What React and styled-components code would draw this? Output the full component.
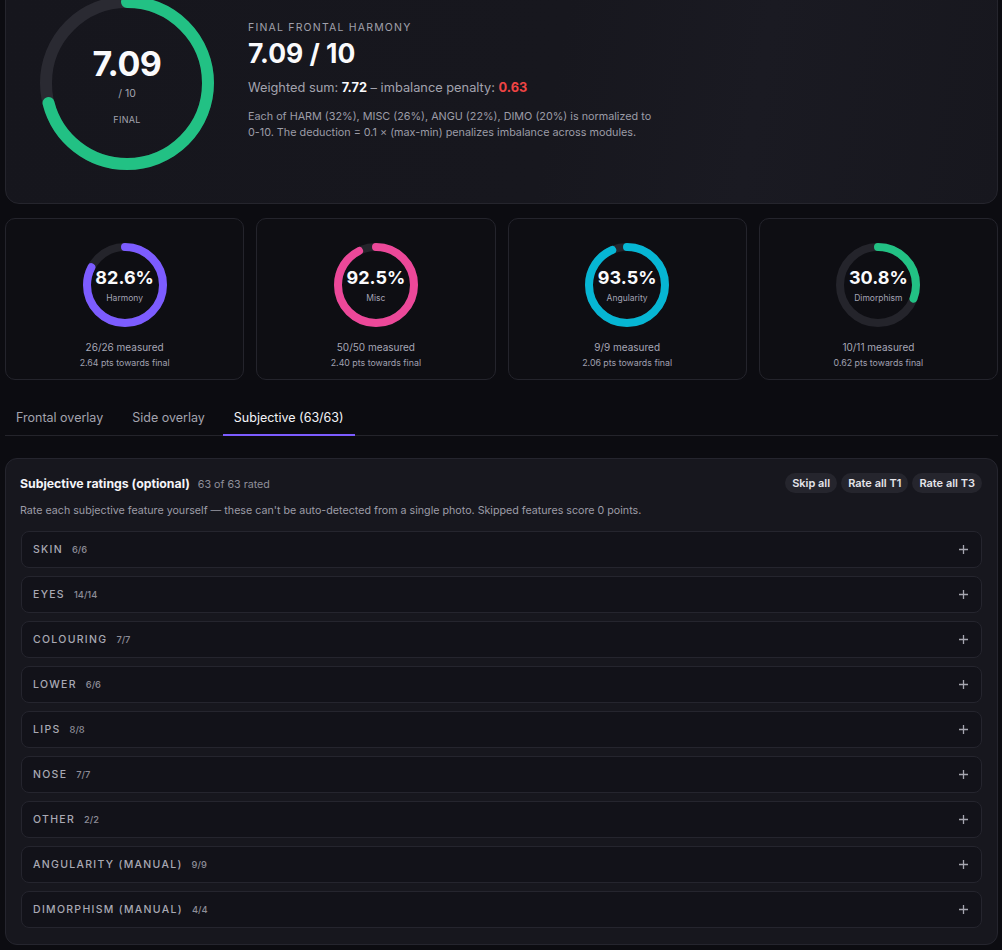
import React from 'react'
import styled, { createGlobalStyle } from 'styled-components'

const GlobalStyle = createGlobalStyle`
    html, body {
        margin: 0;
        padding: 0;
        background: #0c0c11;
    }
    body {
        font-family: Inter, "Noto Sans", "Liberation Sans", sans-serif;
        color: #e8e8ee;
        -webkit-font-smoothing: antialiased;
    }
    * {
        box-sizing: border-box;
    }
`

const Page = styled.main`
    margin-top: -39px;
    padding: 0 4px 20px 5px;
`

const Hero = styled.section`
    display: flex;
    align-items: flex-start;
    gap: 34px;
    padding: 34px 34px 33px 34px;
    border: 1px solid #25252d;
    border-radius: 14px;
    background: linear-gradient(100deg, #16161d 0%, #17171e 55%, #1a1a22 75%, #17171e 100%);
`

const RingWrap = styled.div`
    position: relative;
    width: ${p => p.size}px;
    height: ${p => p.size}px;
    flex-shrink: 0;

    svg {
        display: block;
    }
`

const RingCenter = styled.div`
    position: absolute;
    inset: 0;
    display: flex;
    flex-direction: column;
    align-items: center;
    justify-content: center;
    text-align: center;
`

const BigValue = styled.div`
    margin-top: 4px;
    font-size: 34px;
    font-weight: 700;
    line-height: 40px;
    color: #fafafc;
    letter-spacing: -0.5px;
`

const BigSub = styled.div`
    margin-top: 3px;
    font-size: 10.5px;
    line-height: 14px;
    color: #a3a3ae;
`

const BigTag = styled.div`
    margin-top: 13px;
    font-size: 9px;
    line-height: 12px;
    color: #a3a3ae;
    letter-spacing: 0.3px;
`

const HeroText = styled.div`
    padding-top: 25px;
`

const Eyebrow = styled.div`
    font-size: 10.5px;
    line-height: 14px;
    letter-spacing: 1.2px;
    color: #a0a0ab;
    text-transform: uppercase;
`

const HeroTitle = styled.h1`
    margin: 2px 0 0;
    font-size: 26.5px;
    line-height: 32px;
    font-weight: 700;
    color: #fafafc;
`

const SumLine = styled.p`
    margin: 9px 0 0;
    font-size: 12.8px;
    line-height: 20px;
    color: #a3a3ae;

    b {
        color: #fafafc;
        font-weight: 700;
    }
`

const Penalty = styled.b`
    && {
        color: #ef4444;
    }
`

const Note = styled.p`
    margin: 11px 0 0;
    max-width: 412px;
    font-size: 10.8px;
    line-height: 16px;
    color: #9c9ca7;
`

const StatGrid = styled.div`
    display: grid;
    grid-template-columns: repeat(4, 1fr);
    gap: 12px;
    margin-top: 14px;
`

const StatCard = styled.div`
    display: flex;
    flex-direction: column;
    align-items: center;
    height: 162px;
    padding: 24px 10px 0;
    border: 1px solid #24242c;
    border-radius: 10px;
    background: #0e0e13;
`

const Pct = styled.div`
    margin-top: 0;
    font-size: 18px;
    line-height: 22px;
    font-weight: 700;
    color: #fafafc;
`

const PctLabel = styled.div`
    margin-top: 4px;
    font-size: 8.5px;
    line-height: 10px;
    color: #a3a3b4;
`

const Measured = styled.div`
    margin-top: 12px;
    font-size: 10px;
    line-height: 16px;
    color: #a6a6b6;
`

const Towards = styled.div`
    margin-top: 1px;
    font-size: 8.8px;
    line-height: 14px;
    color: #a0a0b0;
`

const Tabs = styled.nav`
    display: flex;
    gap: 7px;
    margin-top: 21px;
    border-bottom: 1px solid #24242b;
`

const Tab = styled.button`
    padding: 8px 11px 7px;
    margin-bottom: -1px;
    border: 0;
    border-bottom: 2px solid ${p => (p.active ? '#7c5cff' : 'transparent')};
    background: none;
    font-family: inherit;
    font-size: 12.5px;
    line-height: 18px;
    color: ${p => (p.active ? '#f4f4f8' : '#a3a3ae')};
    cursor: pointer;
`

const Panel = styled.section`
    margin-top: 22px;
    padding: 14px 15px 16px 14px;
    border: 1px solid #25252e;
    border-radius: 12px;
    background: #17171e;
`

const PanelHead = styled.div`
    display: flex;
    align-items: center;
    justify-content: space-between;
    height: 20px;
`

const TitleGroup = styled.div`
    display: flex;
    align-items: baseline;
    gap: 8px;
`

const PanelTitle = styled.h2`
    margin: 0;
    font-size: 12.3px;
    font-weight: 700;
    color: #f4f4f8;
`

const RatedCount = styled.span`
    font-size: 10.7px;
    color: #8f8f9a;
`

const Actions = styled.div`
    display: flex;
    gap: 4px;
`

const Pill = styled.button`
    height: 20px;
    padding: 0 7px;
    border: 0;
    border-radius: 10px;
    background: #25252d;
    font-family: inherit;
    font-size: 11px;
    font-weight: 600;
    color: #e4e4ea;
    cursor: pointer;
`

const PanelNote = styled.p`
    margin: 10px 0 0;
    font-size: 10.7px;
    line-height: 16px;
    color: #9c9ca7;
`

const Sections = styled.div`
    display: flex;
    flex-direction: column;
    gap: 8px;
    margin: 12px 0 0 1px;
`

const SectionRow = styled.div`
    display: flex;
    align-items: center;
    height: 37px;
    padding: 0 11px 0 11px;
    border: 1px solid #25252e;
    border-radius: 8px;
    background: #121219;
`

const SectionName = styled.span`
    font-size: 10.5px;
    font-weight: 500;
    letter-spacing: 1.3px;
    color: #a9a9b4;
`

const SectionCount = styled.span`
    margin-left: 9px;
    font-size: 9.3px;
    font-weight: 500;
    color: #8d8d98;
`

const Plus = styled.span`
    margin-left: auto;
    margin-right: 1px;
    display: flex;
    color: #a6a6b0;
`

const Ring = ({ size, stroke, pct, color, track, children }) => {
    const r = (size - stroke) / 2
    const len = 2 * Math.PI * r
    return (
        <RingWrap size={size}>
            <svg width={size} height={size} viewBox={`0 0 ${size} ${size}`}>
                <circle cx={size / 2} cy={size / 2} r={r} fill='none' stroke={track} strokeWidth={stroke} />
                <circle
                    cx={size / 2}
                    cy={size / 2}
                    r={r}
                    fill='none'
                    stroke={color}
                    strokeWidth={stroke}
                    strokeLinecap='round'
                    strokeDasharray={`${len * pct} ${len}`}
                    transform={`rotate(-90 ${size / 2} ${size / 2})`}
                />
            </svg>
            <RingCenter>{children}</RingCenter>
        </RingWrap>
    )
}

const stats = [
    { id: 'harm', pct: 0.826, label: 'Harmony', color: '#7c5cff', measured: '26/26 measured', pts: '2.64' },
    { id: 'misc', pct: 0.925, label: 'Misc', color: '#ec4899', measured: '50/50 measured', pts: '2.40' },
    { id: 'angu', pct: 0.935, label: 'Angularity', color: '#06b6d4', measured: '9/9 measured', pts: '2.06' },
    { id: 'dimo', pct: 0.308, label: 'Dimorphism', color: '#22c184', measured: '10/11 measured', pts: '0.62' },
]

const sections = [
    { name: 'Skin', count: '6/6' },
    { name: 'Eyes', count: '14/14' },
    { name: 'Colouring', count: '7/7' },
    { name: 'Lower', count: '6/6' },
    { name: 'Lips', count: '8/8' },
    { name: 'Nose', count: '7/7' },
    { name: 'Other', count: '2/2' },
    { name: 'Angularity (manual)', count: '9/9' },
    { name: 'Dimorphism (manual)', count: '4/4' },
]

const PlusIcon = () => (
    <svg width='11' height='11' viewBox='0 0 11 11'>
        <path d='M5.5 1v9M1 5.5h9' stroke='currentColor' strokeWidth='1.3' />
    </svg>
)

const App = () => {
    return (
        <>
            <GlobalStyle />
            <Page>
                <Hero>
                    <Ring size={174} stroke={12} pct={0.709} color='#22c184' track='#2a2a32'>
                        <BigValue>7.09</BigValue>
                        <BigSub>/ 10</BigSub>
                        <BigTag>FINAL</BigTag>
                    </Ring>
                    <HeroText>
                        <Eyebrow>Final frontal harmony</Eyebrow>
                        <HeroTitle>7.09 / 10</HeroTitle>
                        <SumLine>
                            Weighted sum: <b>7.72</b> – imbalance penalty: <Penalty>0.63</Penalty>
                        </SumLine>
                        <Note>
                            Each of HARM (32%), MISC (26%), ANGU (22%), DIMO (20%) is normalized to 0-10. The
                            deduction = 0.1 × (max-min) penalizes imbalance across modules.
                        </Note>
                    </HeroText>
                </Hero>

                <StatGrid>
                    {stats.map(stat => (
                        <StatCard key={stat.id}>
                            <Ring size={84} stroke={8} pct={stat.pct} color={stat.color} track='#24242b'>
                                <Pct>{(stat.pct * 100).toFixed(1)}%</Pct>
                                <PctLabel>{stat.label}</PctLabel>
                            </Ring>
                            <Measured>{stat.measured}</Measured>
                            <Towards>{stat.pts} pts towards final</Towards>
                        </StatCard>
                    ))}
                </StatGrid>

                <Tabs>
                    <Tab>Frontal overlay</Tab>
                    <Tab>Side overlay</Tab>
                    <Tab active>Subjective (63/63)</Tab>
                </Tabs>

                <Panel>
                    <PanelHead>
                        <TitleGroup>
                            <PanelTitle>Subjective ratings (optional)</PanelTitle>
                            <RatedCount>63 of 63 rated</RatedCount>
                        </TitleGroup>
                        <Actions>
                            <Pill>Skip all</Pill>
                            <Pill>Rate all T1</Pill>
                            <Pill>Rate all T3</Pill>
                        </Actions>
                    </PanelHead>
                    <PanelNote>
                        Rate each subjective feature yourself — these can't be auto-detected from a single photo.
                        Skipped features score 0 points.
                    </PanelNote>
                    <Sections>
                        {sections.map(section => (
                            <SectionRow key={section.name}>
                                <SectionName>{section.name.toUpperCase()}</SectionName>
                                <SectionCount>{section.count}</SectionCount>
                                <Plus>
                                    <PlusIcon />
                                </Plus>
                            </SectionRow>
                        ))}
                    </Sections>
                </Panel>
            </Page>
        </>
    )
}

export default App
